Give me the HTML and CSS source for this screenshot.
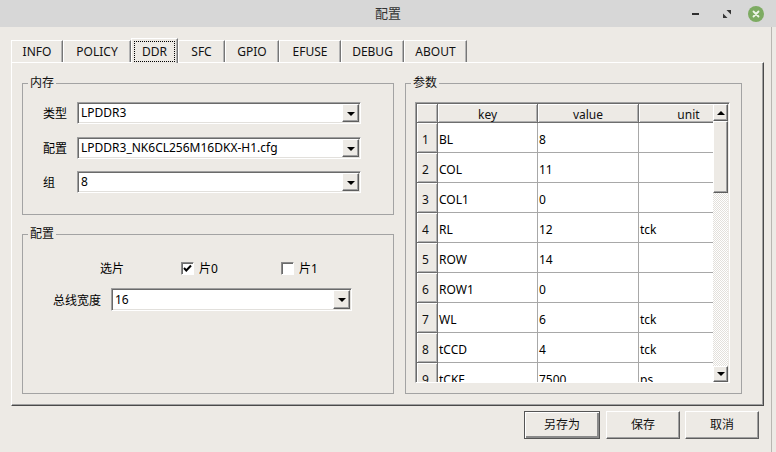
FILE: index.html
```html
<!DOCTYPE html>
<html>
<head>
<meta charset="utf-8">
<link rel="stylesheet" href="styles.css">
</head>
<body>
<div class="titlebar">
  <span class="title">配置</span>
  <div class="wm">
    <span class="wm-min"></span>
    <svg class="wm-restore" width="8" height="8" viewBox="0 0 8 8"><polygon points="3.5,0 8,0 8,4.5" fill="#333"/><polygon points="0,3.5 0,8 4.5,8" fill="#333"/></svg>
    <span class="wm-close"><svg width="8" height="8" viewBox="0 0 8 8"><path d="M1.5 1.5 L6.5 6.5 M6.5 1.5 L1.5 6.5" stroke="#eef5e8" stroke-width="1.8" stroke-linecap="round"/></svg></span>
  </div>
</div>
<div class="main">
  <div class="tabs">
    <div class="tab t-info">INFO</div>
    <div class="tab t-policy">POLICY</div>
    <div class="tab t-ddr active"><span class="focus">DDR</span></div>
    <div class="tab t-sfc">SFC</div>
    <div class="tab t-gpio">GPIO</div>
    <div class="tab t-efuse">EFUSE</div>
    <div class="tab t-debug">DEBUG</div>
    <div class="tab t-about">ABOUT</div>
  </div>
  <div class="pane">
    <div class="left-col">
      <fieldset class="group g-mem">
        <legend>内存</legend>
        <div class="form-row"><span class="lbl">类型</span><div class="combo w284"><span class="combo-text">LPDDR3</span><span class="arrow"></span></div></div>
        <div class="form-row r2"><span class="lbl">配置</span><div class="combo w284"><span class="combo-text">LPDDR3_NK6CL256M16DKX-H1.cfg</span><span class="arrow"></span></div></div>
        <div class="form-row r3"><span class="lbl">组</span><div class="combo w284"><span class="combo-text">8</span><span class="arrow"></span></div></div>
      </fieldset>
      <fieldset class="group g-cfg">
        <legend>配置</legend>
        <div class="chip-row">
          <span class="chip-lbl">选片</span>
          <span class="check-item"><span class="checkbox"><svg width="11" height="11" viewBox="0 0 11 11"><path d="M2 5 L4.3 7.5 L9 2.5" stroke="#000" stroke-width="2" fill="none"/></svg></span>片0</span>
          <span class="check-item"><span class="checkbox"></span>片1</span>
        </div>
        <div class="bus-row">
          <span class="bus-lbl">总线宽度</span>
          <div class="combo w241 h23"><span class="combo-text">16</span><span class="arrow"></span></div>
        </div>
      </fieldset>
    </div>
    <fieldset class="group g-params">
      <legend>参数</legend>
      <div class="table-frame">
        <div class="viewport">
          <div class="grid">
            <div class="hcell corner"></div>
            <div class="hcell">key</div>
            <div class="hcell">value</div>
            <div class="hcell">unit</div>

            <div class="vcell">1</div><div class="cell">BL</div><div class="cell">8</div><div class="cell"></div>
            <div class="vcell">2</div><div class="cell">COL</div><div class="cell">11</div><div class="cell"></div>
            <div class="vcell">3</div><div class="cell">COL1</div><div class="cell">0</div><div class="cell"></div>
            <div class="vcell">4</div><div class="cell">RL</div><div class="cell">12</div><div class="cell">tck</div>
            <div class="vcell">5</div><div class="cell">ROW</div><div class="cell">14</div><div class="cell"></div>
            <div class="vcell">6</div><div class="cell">ROW1</div><div class="cell">0</div><div class="cell"></div>
            <div class="vcell">7</div><div class="cell">WL</div><div class="cell">6</div><div class="cell">tck</div>
            <div class="vcell">8</div><div class="cell">tCCD</div><div class="cell">4</div><div class="cell">tck</div>
            <div class="vcell">9</div><div class="cell">tCKE</div><div class="cell">7500</div><div class="cell">ps</div>
          </div>
        </div>
        <div class="vscroll">
          <div class="sb-btn raised"><span class="tri-up"></span></div>
          <div class="sb-handle raised"></div>
          <div class="sb-track"></div>
          <div class="sb-btn sb-down raised"><span class="tri-down"></span></div>
        </div>
      </div>
    </fieldset>
  </div>
  <div class="buttons">
    <div class="btn default">另存为</div>
    <div class="btn">保存</div>
    <div class="btn">取消</div>
  </div>
</div>
<div class="edge"></div>
</body>
</html>
```
FILE: styles.css
```css
* { box-sizing: border-box; }
html, body { margin: 0; padding: 0; }
body {
  width: 776px;
  height: 452px;
  overflow: hidden;
  position: relative;
  background: #edeae5;
  font-family: "Noto Sans", "Noto Sans CJK SC", sans-serif;
  font-size: 12px;
  color: #000;
}

/* title bar */
.titlebar {
  height: 27px;
  background: #d7d7d7;
  display: grid;
  grid-template-columns: 1fr auto 1fr;
  align-items: center;
}
.title { grid-column: 2; font-size: 13px; color: #333; line-height: 27px; }
.wm { grid-column: 3; justify-self: end; display: flex; align-items: center; margin-right: 12px; }
.wm-min { width: 7px; height: 2px; background: #2e2e2e; margin-right: 24px; }
.wm-restore { display: block; margin-right: 17px; }
.wm-close {
  width: 16px; height: 16px; border-radius: 50%;
  background: #7dab62;
  display: flex; align-items: center; justify-content: center;
}

/* the edge of the window behind, seen on the right */
.edge {
  position: absolute;
  left: 771px;
  top: 27px;
  width: 1px;
  height: 425px;
  background: #b9b6b1;
}

.main { padding: 11px 12px 0 11px; }

/* tabs */
.tabs { display: flex; align-items: flex-end; height: 24px; }
.tab {
  height: 22px;
  line-height: 22px;
  text-align: center;
  border-top: 1px solid #fff;
  border-left: 1px solid #fff;
  border-right: 1px solid #767676;
  box-shadow: inset -1px 0 #b4b4b4;
  color: #111;
}
.t-info { width: 52px; }
.t-policy { width: 68px; }
.t-ddr { width: 47px; }
.t-sfc { width: 47px; }
.t-gpio { width: 54px; }
.t-efuse { width: 62px; }
.t-debug { width: 63px; }
.t-about { width: 63px; }
.tab.active {
  height: 25px;
  margin-bottom: -1px;
  position: relative;
  z-index: 1;
  background: #edeae5;
  padding: 2px 2px 0 2px;
}
.focus {
  display: block;
  height: 21px;
  line-height: 20px;
  border: 1px dotted #000;
}

/* pane */
.pane {
  height: 344px;
  border-top: 1px solid #fff;
  border-left: 1px solid #fff;
  border-right: 1px solid #4a4a4a;
  border-bottom: 1px solid #4a4a4a;
  box-shadow: inset -1px -1px #a0a0a0;
  display: flex;
  gap: 11px;
  padding: 12px 20px 0 10px;
}
.left-col { width: 372px; display: flex; flex-direction: column; gap: 11px; }

.group {
  margin: 0;
  padding: 0;
  min-width: 0;
  border: 1px solid #a3a3a3;
}
.group legend {
  margin-left: 5px;
  padding: 0 2px;
  line-height: 16px;
  color: #111;
}
.g-mem { height: 140px; }
.g-cfg { height: 168px; }
.g-params { width: 337px; height: 319px; }

/* form rows */
.form-row { display: flex; align-items: center; height: 22px; margin: 11px 0 0 20px; }
.form-row.r2 { margin-top: 13px; }
.form-row.r3 { margin-top: 12px; }
.lbl { width: 34px; }

.combo {
  display: flex;
  height: 22px;
  background: #fff;
  border: 1px solid;
  border-color: #a0a0a0 #fff #fff #a0a0a0;
  box-shadow: inset 1px 1px #6a6a6a, inset -1px -1px #e2e0dc;
  padding: 1px;
}
.w284 { width: 284px; }
.w241 { width: 241px; }
.h23 { height: 23px; }
.combo-text { flex: 1; padding-left: 2px; line-height: 18px; white-space: nowrap; overflow: hidden; }
.h23 .combo-text { line-height: 19px; }
.arrow {
  width: 17px;
  background: #edeae5;
  border: 1px solid;
  border-color: #fff #5e5e5e #5e5e5e #fff;
  box-shadow: inset -1px -1px #a0a0a0;
  display: flex; align-items: center; justify-content: center;
}
.arrow::before {
  content: "";
  border-left: 4px solid transparent;
  border-right: 4px solid transparent;
  border-top: 4px solid #000;
  margin-top: 1px;
}

/* chip select row */
.chip-row { display: flex; align-items: center; height: 16px; margin: 18px 0 0 77px; }
.chip-lbl { width: 81px; }
.check-item { width: 100px; display: flex; align-items: center; gap: 5px; }
.checkbox {
  width: 13px; height: 13px;
  background: #fff;
  border: 1px solid;
  border-color: #8a8a8a #fff #fff #8a8a8a;
  box-shadow: inset 1px 1px #6a6a6a;
  display: flex; align-items: center; justify-content: center;
}
.bus-row { display: flex; align-items: center; margin-top: 12px; }
.bus-lbl { width: 78px; text-align: right; margin-right: 10px; }

/* table */
.table-frame {
  margin: 11px 0 0 9px;
  width: 315px;
  height: 281px;
  border: 1px solid;
  border-color: #a0a0a0 #fff #fff #a0a0a0;
  box-shadow: inset 1px 1px #6a6a6a;
  padding: 1px 0 0 1px;
  display: flex;
}
.viewport { width: 296px; overflow: hidden; }
.grid {
  display: grid;
  grid-template-columns: 21px 100px 101px 100px;
  grid-template-rows: 19px;
  grid-auto-rows: 30px;
  width: 322px;
}
.hcell {
  background: #edeae5;
  border-right: 1px solid #6e6e6e;
  border-bottom: 1px solid #6e6e6e;
  box-shadow: inset 1px 1px #fff, inset -1px -1px #b0b0b0;
  text-align: center;
  padding-top: 2px;
  line-height: 17px;
  color: #111;
}
.vcell {
  background: #edeae5;
  border-right: 1px solid #6e6e6e;
  border-bottom: 1px solid #6e6e6e;
  box-shadow: inset 1px 1px #fff, inset -1px -1px #b0b0b0;
  padding: 4px 0 0 5px;
  line-height: 25px;
  color: #111;
}
.cell {
  background: #fff;
  border-right: 1px solid #a8a8a8;
  border-bottom: 1px solid #a8a8a8;
  padding: 4px 0 0 1px;
  line-height: 25px;
  white-space: nowrap;
}

.vscroll { width: 15px; display: flex; flex-direction: column; }
.raised {
  background: #edeae5;
  border: 1px solid;
  border-color: #fff #5e5e5e #5e5e5e #fff;
  box-shadow: inset -1px -1px #a0a0a0;
}
.sb-btn { height: 17px; display: flex; align-items: center; justify-content: center; }
.sb-down { height: 16px; }
.sb-handle { height: 72px; }
.sb-track {
  flex: 1;
  background: repeating-conic-gradient(#ffffff 0 25%, #e3e0db 0 50%) 0 0 / 2px 2px;
}
.tri-up { border-left: 4px solid transparent; border-right: 4px solid transparent; border-bottom: 4px solid #000; }
.tri-down { border-left: 4px solid transparent; border-right: 4px solid transparent; border-top: 4px solid #000; }

/* buttons */
.buttons { display: flex; justify-content: flex-end; gap: 5px; margin-top: 5px; padding-right: 5px; }
.btn {
  width: 74px;
  height: 28px;
  line-height: 25px;
  text-align: center;
  background: #edeae5;
  border: 1px solid;
  border-color: #fff #5e5e5e #5e5e5e #fff;
  box-shadow: inset -1px -1px #a0a0a0;
  color: #111;
}
.btn.default {
  width: 76px;
  margin-right: 1px;
  border: 1px solid #555;
  box-shadow: inset 1px 1px #fff, inset -2px -2px #8a8a8a;
  line-height: 26px;
}
```
